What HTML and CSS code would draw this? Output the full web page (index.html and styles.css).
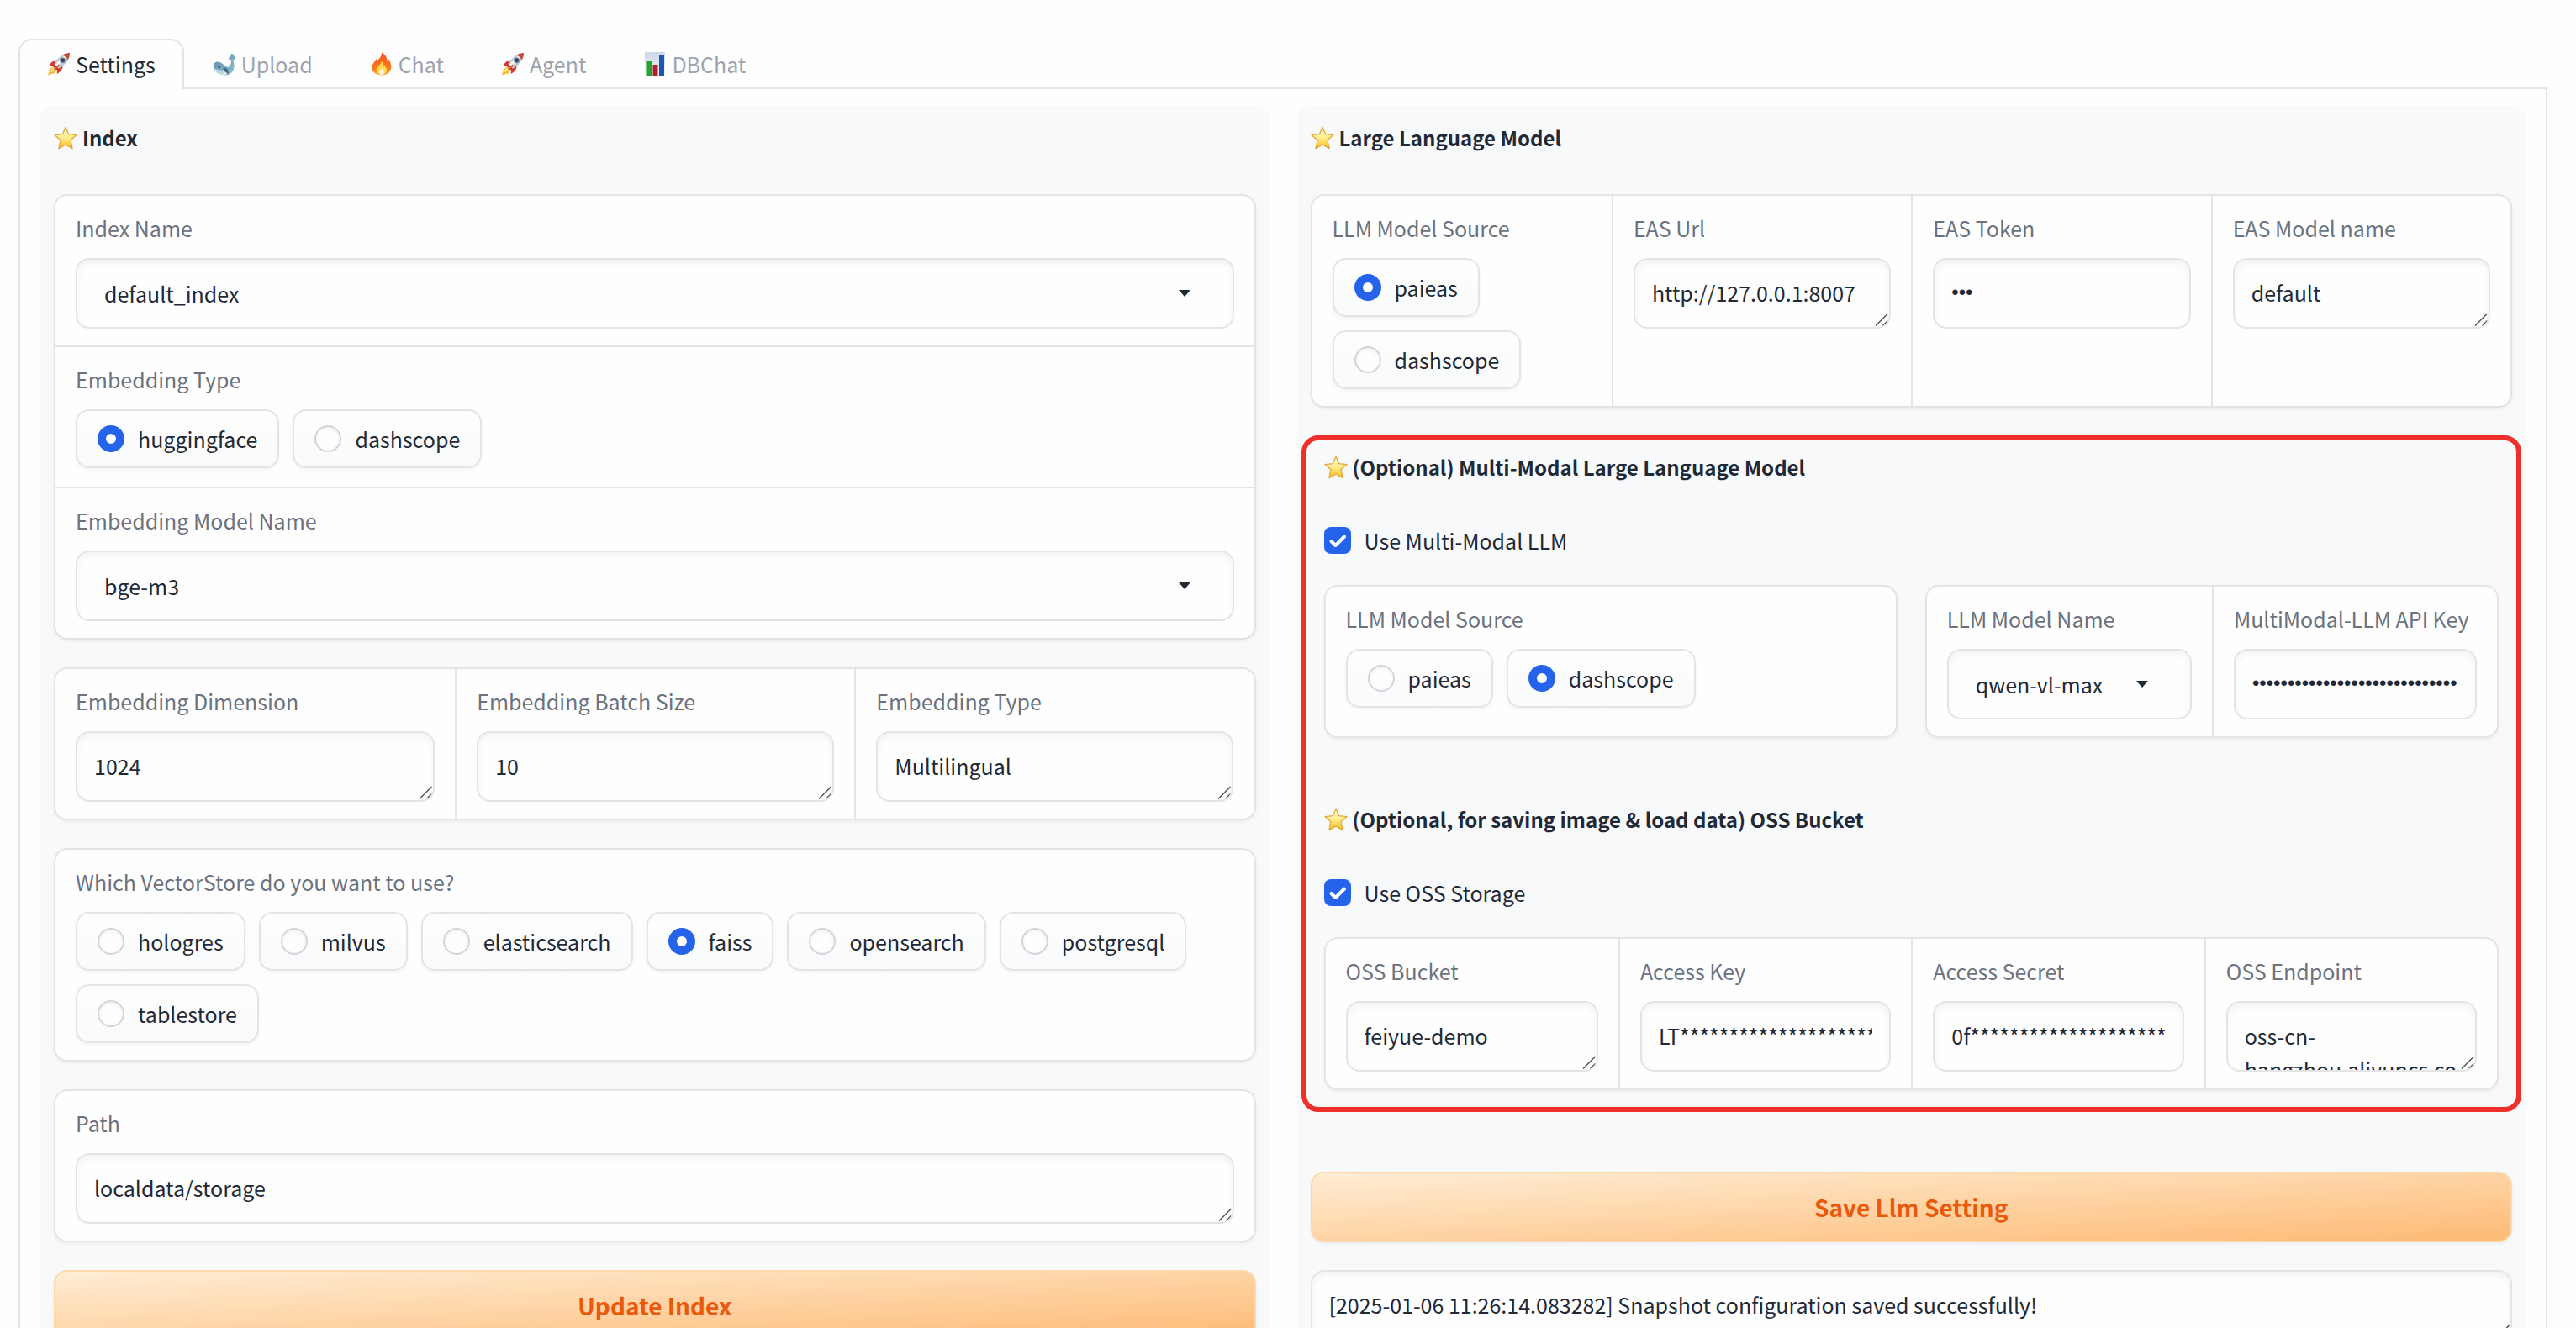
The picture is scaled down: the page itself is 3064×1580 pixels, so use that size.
FILE: index.html
```html
<!DOCTYPE html>
<html lang="en">
<head>
<meta charset="utf-8">
<title>Settings</title>
<link rel="stylesheet" href="styles.css">
</head>
<body>
<svg class="sprite" aria-hidden="true">
  <defs>
    <linearGradient id="gold" x1="0" y1="0" x2="0" y2="1">
      <stop offset="0" stop-color="#fdf8d0"/><stop offset=".5" stop-color="#fdee8c"/><stop offset="1" stop-color="#f8b916"/>
    </linearGradient>
    <linearGradient id="flame" x1="0" y1="0" x2="0" y2="1">
      <stop offset="0" stop-color="#f4511e"/><stop offset=".7" stop-color="#fb7a1c"/><stop offset="1" stop-color="#fcae2a"/>
    </linearGradient>
    <linearGradient id="sea" x1="0" y1="0" x2="1" y2="1">
      <stop offset="0" stop-color="#5f8ba3"/><stop offset="1" stop-color="#8fc1d6"/>
    </linearGradient>
    <linearGradient id="sheet" x1="0" y1="0" x2="0" y2="1">
      <stop offset="0" stop-color="#ccd9e6"/><stop offset="1" stop-color="#f2f6fa"/>
    </linearGradient>
    <symbol id="star" viewBox="0 0 28 28">
      <path d="M14 1.2 17.6 9.6 27 10.6 20 16.8 22.1 26.6 14 22 5.900 26.600 8 16.800 1 10.600 10.400 9.600Z" fill="url(#gold)" stroke="#e3a73c" stroke-width="1.300" stroke-linejoin="round"/>
    </symbol>
    <symbol id="rocket" viewBox="0 0 28 28">
      <path d="M7.500 17 1 22.500 3 22.300 .8 27.500 7.500 25.200 7.300 27 11.500 21Z" fill="#fbb62c"/>
      <path d="M7 18.500 3.800 22.500 4.500 24 9 22Z" fill="#fff08a"/>
      <path d="M12.500 9.500C8 9 4.500 12 2.500 16.500L8.500 16ZM18.500 15.500C19 20 16 23.500 11.800 26L12 19.500Z" fill="#d5382b"/>
      <path d="M27 1C19.500 1.500 13 5.500 8.200 14.500L13.500 19.800C22.500 15 26.500 8.500 27 1Z" fill="#b9cdd9"/>
      <path d="M25 3C18.500 5 13.500 9.500 9.500 15.600L11.500 17.600C17 13 22 8 25 3Z" fill="#eef4f7"/>
      <path d="M27 1C24 1.200 21.300 1.900 19 3L25 9C26.200 6.500 26.900 3.900 27 1Z" fill="#cf4333"/>
      <circle cx="18.500" cy="9.800" r="3.200" fill="#5c6f7c"/><circle cx="18.500" cy="9.800" r="1.800" fill="#26384a"/>
      <path d="M8.200 14.500 13.500 19.800 11.700 21.200 6.800 16.300Z" fill="#a52b25"/>
      <path d="M13.500 14.500 15 16 9.500 22 8 20.500Z" fill="#e9503c"/>
    </symbol>
    <symbol id="whale" viewBox="0 0 28 28">
      <path d="M23 .5C22.800 3.500 19.500 5.500 18.500 9 19.800 8.300 21 8.300 22 9.500 22.500 13 21 16.500 18 18 13.500 16 10 11.500 6 11.500 2 11.500 .3 15 .8 18 2 23.500 8 27.500 15 27.500 21.500 27.500 25.500 22.500 25.500 17 25.500 14 24.600 12 24 9.800 25.800 9.500 27 8 27 5.500 25 5 23.700 3 23 .5Z" fill="url(#sea)"/>
      <path d="M1.500 19.500C6 22 12 22.500 16 20.500 18 22.500 17.500 26 15.500 27 9.500 27.500 4 24.500 1.500 19.500Z" fill="#dcebf2"/>
      <path d="M4.500 22.500 11.500 25.500M6.500 21.800 14 25" stroke="#9fb9c6" stroke-width=".8"/>
      <path d="M12.500 18.500C16 18 19 20.500 19 25.500 15.500 25 12.500 22.500 12.500 18.500Z" fill="#3f6b83"/>
      <circle cx="8" cy="17.500" r="1.200" fill="#223b49"/>
    </symbol>
    <symbol id="fire" viewBox="0 0 28 28">
      <path d="M13.800 .5C14.500 5 11.500 7 9.500 9.800 8.800 8.800 8.900 7.500 8.300 6.500 7.500 10.500 2.500 13 2.500 18.500 2.500 24 7.500 27.500 14 27.500 20.500 27.500 25.300 23.500 25.300 17.500 25.300 13.500 23.500 11 22.800 8.500 21.600 9.700 21.600 11.200 21 12.300 20.500 7 18.500 2.500 13.800 .5Z" fill="url(#flame)"/>
      <path d="M14.500 10C14.500 14 8 16.500 8 21.500 8 25 10.500 26.800 14 26.800 17.800 26.800 20 24.700 20 21.600 20 18.500 18 17.500 17.900 15.200 16.300 16 16.500 17.200 16 18 16.500 14.500 16.400 11.800 14.500 10Z" fill="#ffd84f"/>
      <path d="M13.800 19C13.500 21 10.800 22 10.800 24.200 10.800 26 12.300 26.800 14 26.800 16 26.800 17.300 25.700 17.300 24 17.300 22.200 14.800 21.500 13.800 19Z" fill="#fff8d8"/>
    </symbol>
    <symbol id="chart" viewBox="0 0 28 28">
      <path d="M2 0H26V28H2Z" fill="url(#sheet)"/>
      <path d="M3.500 10H10V28H3.500Z" fill="#26a52e"/>
      <path d="M11.500 15H17.500V28H11.500Z" fill="#b3222b"/>
      <path d="M19 4H25V28H19Z" fill="#1d55b5"/>
    </symbol>
  </defs>
</svg>

<main class="page">
  <nav class="tabs" aria-label="Sections">
    <button class="tab tab-active" type="button"><svg class="tab-icon" aria-hidden="true"><use href="#rocket"/></svg>Settings</button>
    <button class="tab" type="button"><svg class="tab-icon" aria-hidden="true"><use href="#whale"/></svg>Upload</button>
    <button class="tab" type="button"><svg class="tab-icon" aria-hidden="true"><use href="#fire"/></svg>Chat</button>
    <button class="tab" type="button"><svg class="tab-icon" aria-hidden="true"><use href="#rocket"/></svg>Agent</button>
    <button class="tab" type="button"><svg class="tab-icon" aria-hidden="true"><use href="#chart"/></svg>DBChat</button>
  </nav>

  <div class="tab-body">
    <section class="panel">
      <h2 class="heading"><svg class="star" aria-hidden="true"><use href="#star"/></svg>Index</h2>

      <div class="card stack">
        <div class="field">
          <label class="label" for="index-name">Index Name</label>
          <select class="box select" id="index-name"><option>default_index</option></select>
        </div>
        <fieldset class="field">
          <legend class="label">Embedding Type</legend>
          <div class="choices">
            <label class="choice"><input class="radio" type="radio" name="embed" checked>huggingface</label>
            <label class="choice"><input class="radio" type="radio" name="embed">dashscope</label>
          </div>
        </fieldset>
        <div class="field">
          <label class="label" for="embed-model">Embedding Model Name</label>
          <select class="box select" id="embed-model"><option>bge-m3</option></select>
        </div>
      </div>

      <div class="card row">
        <div class="field">
          <label class="label" for="embed-dim">Embedding Dimension</label>
          <textarea class="box area" id="embed-dim" rows="1">1024</textarea>
        </div>
        <div class="field">
          <label class="label" for="embed-batch">Embedding Batch Size</label>
          <textarea class="box area" id="embed-batch" rows="1">10</textarea>
        </div>
        <div class="field">
          <label class="label" for="embed-type">Embedding Type</label>
          <textarea class="box area" id="embed-type" rows="1">Multilingual</textarea>
        </div>
      </div>

      <div class="card">
        <fieldset class="field">
          <legend class="label">Which VectorStore do you want to use?</legend>
          <div class="choices">
            <label class="choice"><input class="radio" type="radio" name="store">hologres</label>
            <label class="choice"><input class="radio" type="radio" name="store">milvus</label>
            <label class="choice"><input class="radio" type="radio" name="store">elasticsearch</label>
            <label class="choice"><input class="radio" type="radio" name="store" checked>faiss</label>
            <label class="choice"><input class="radio" type="radio" name="store">opensearch</label>
            <label class="choice"><input class="radio" type="radio" name="store">postgresql</label>
            <label class="choice"><input class="radio" type="radio" name="store">tablestore</label>
          </div>
        </fieldset>
      </div>

      <div class="card">
        <div class="field">
          <label class="label" for="path">Path</label>
          <textarea class="box area" id="path" rows="1">localdata/storage</textarea>
        </div>
      </div>

      <button class="primary" type="button">Update Index</button>
    </section>

    <section class="panel">
      <h2 class="heading"><svg class="star" aria-hidden="true"><use href="#star"/></svg>Large Language Model</h2>

      <div class="card row">
        <fieldset class="field">
          <legend class="label">LLM Model Source</legend>
          <div class="choices">
            <label class="choice"><input class="radio" type="radio" name="llm" checked>paieas</label>
            <label class="choice"><input class="radio" type="radio" name="llm">dashscope</label>
          </div>
        </fieldset>
        <div class="field">
          <label class="label" for="eas-url">EAS Url</label>
          <textarea class="box area" id="eas-url" rows="1">http://127.0.0.1:8007</textarea>
        </div>
        <div class="field">
          <label class="label" for="eas-token">EAS Token</label>
          <input class="box secret" id="eas-token" type="password" value="abc">
        </div>
        <div class="field">
          <label class="label" for="eas-model">EAS Model name</label>
          <textarea class="box area" id="eas-model" rows="1">default</textarea>
        </div>
      </div>

      <div class="highlight">
        <h2 class="heading"><svg class="star" aria-hidden="true"><use href="#star"/></svg>(Optional) Multi-Modal Large Language Model</h2>
        <label class="toggle"><input class="check" type="checkbox" checked>Use Multi-Modal LLM</label>
        <div class="pair">
          <div class="card">
            <fieldset class="field">
              <legend class="label">LLM Model Source</legend>
              <div class="choices">
                <label class="choice"><input class="radio" type="radio" name="mllm">paieas</label>
                <label class="choice"><input class="radio" type="radio" name="mllm" checked>dashscope</label>
              </div>
            </fieldset>
          </div>
          <div class="card row">
            <div class="field">
              <label class="label" for="mllm-name">LLM Model Name</label>
              <select class="box select" id="mllm-name"><option>qwen-vl-max</option></select>
            </div>
            <div class="field">
              <label class="label" for="mllm-key">MultiModal-LLM API Key</label>
              <input class="box secret" id="mllm-key" type="password" value="abcdefghijklmnopqrstuvwxyzabc">
            </div>
          </div>
        </div>

        <h2 class="heading heading-next"><svg class="star" aria-hidden="true"><use href="#star"/></svg>(Optional, for saving image &amp; load data) OSS Bucket</h2>
        <label class="toggle"><input class="check" type="checkbox" checked>Use OSS Storage</label>
        <div class="card row">
          <div class="field">
            <label class="label" for="oss-bucket">OSS Bucket</label>
            <textarea class="box area" id="oss-bucket" rows="1">feiyue-demo</textarea>
          </div>
          <div class="field">
            <label class="label" for="oss-key">Access Key</label>
            <input class="box" id="oss-key" type="text" value="LT**********************">
          </div>
          <div class="field">
            <label class="label" for="oss-secret">Access Secret</label>
            <input class="box" id="oss-secret" type="text" value="0f********************">
          </div>
          <div class="field">
            <label class="label" for="oss-endpoint">OSS Endpoint</label>
            <textarea class="box area" id="oss-endpoint" rows="1">oss-cn-hangzhou.aliyuncs.com</textarea>
          </div>
        </div>
      </div>

      <button class="primary primary-save" type="button">Save Llm Setting</button>
      <textarea class="box area status" aria-label="Status" rows="1">[2025-01-06 11:26:14.083282] Snapshot configuration saved successfully!</textarea>
    </section>
  </div>
</main>
</body>
</html>
```
FILE: styles.css
```css
:root {
  --line: #e4e4e7;
  --text: #1f2937;
  --muted: #6b7280;
  --accent: #2563eb;
}

* { box-sizing: border-box; }

html { scrollbar-width: none; }

body {
  margin: 0;
  background: #fefefe;
  color: var(--text);
  font-family: "Noto Sans CJK SC", "Noto Sans", sans-serif;
  font-size: 25px;
  line-height: 40px;
}

button, input, select, textarea { font: inherit; color: inherit; margin: 0; }

.sprite { display: block; width: 0; height: 0; }

.page {
  height: 100vh;
  overflow: auto;
  scrollbar-width: none;
  padding: 46px 34px 0 22px;
}

/* Tabs */
.tabs {
  display: flex;
  height: 60px;
  box-shadow: inset 0 -2px 0 var(--line);
}

.tab {
  display: flex;
  align-items: center;
  padding: 0 32px 2px;
  border: 2px solid transparent;
  border-bottom: 0;
  border-radius: 16px 16px 0 0;
  background: none;
  color: #9ca3af;
}

.tab-active {
  border-color: var(--line);
  background: #fefefe;
  color: var(--text);
}

.tab-icon { width: 28px; height: 28px; margin-right: 6px; }

.tab-body {
  display: grid;
  grid-template-columns: 1fr 1fr;
  gap: 33px;
  padding: 20px 24px 32px;
  border: solid var(--line);
  border-width: 0 2px 2px;
}

.panel {
  display: flex;
  flex-direction: column;
  gap: 33px;
  min-width: 0;
  padding: 16px;
  border-radius: 16px;
  background: #f8f9fb;
}

.heading {
  display: flex;
  align-items: center;
  margin: 0 0 12px;
  font-size: 24px;
  font-weight: 600;
  line-height: 44px;
}

.heading-next { margin-top: 42px; }

.star { width: 28px; height: 28px; margin-right: 6px; }

/* Cards and fields */
.card {
  border: 2px solid var(--line);
  border-radius: 16px;
  background: #fefefe;
  box-shadow: 0 2px 4px rgba(0, 0, 0, .05);
}

.row {
  display: grid;
  grid-auto-flow: column;
  grid-auto-columns: minmax(0, 1fr);
}

.field {
  min-width: 0;
  margin: 0;
  padding: 20px 24px;
  border: 0;
}

.row > .field + .field { border-left: 2px solid var(--line); }
.stack > .field + .field { border-top: 2px solid var(--line); }
.stack > fieldset.field { padding-bottom: 22px; }

.label {
  display: block;
  padding: 0 0 18px;
  color: var(--muted);
  line-height: 36px;
  white-space: nowrap;
}

/* Floated so that the caption sits inside the fieldset's padding */
legend.label { float: left; width: 100%; }

.box {
  display: block;
  width: 100%;
  height: 84px;
  padding: 19px 20px 21px;
  border: 2px solid var(--line);
  border-radius: 16px;
  background-color: #fefefe;
  box-shadow: inset 0 4px 8px rgba(0, 0, 0, .05);
  line-height: 40px;
}

.secret { font-family: "Liberation Sans", sans-serif; font-size: 24px; }

.select {
  appearance: none;
  padding: 0 32px;
  background-image: url("data:image/svg+xml,%3Csvg xmlns='http://www.w3.org/2000/svg' width='14' height='8'%3E%3Cpath d='M0 0h14l-7 8z' fill='%231f2937'/%3E%3C/svg%3E");
  background-repeat: no-repeat;
  background-position: right 50px center;
}

.area {
  overflow: hidden;
  resize: none;
  background-image: url("data:image/svg+xml,%3Csvg xmlns='http://www.w3.org/2000/svg' width='16' height='16'%3E%3Cpath d='M1 15.500L15.500 1M9.500 15.500L15.500 9.500' stroke='%23555' stroke-width='1.500'/%3E%3C/svg%3E");
  background-repeat: no-repeat;
  background-position: right 1px bottom 1px;
}

.choices { display: flex; flex-wrap: wrap; gap: 16px; clear: both; }

.choice {
  display: flex;
  align-items: center;
  gap: 16px;
  height: 70px;
  padding: 0 24px;
  border: 2px solid var(--line);
  border-radius: 16px;
  background: linear-gradient(to bottom, #fefefe, #f9fafb);
  box-shadow: 0 2px 4px rgba(0, 0, 0, .05);
}

.radio {
  appearance: none;
  width: 32px;
  height: 32px;
  border: 2px solid #d1d5db;
  border-radius: 50%;
  background: #fefefe;
  box-shadow: inset 0 2px 4px rgba(0, 0, 0, .06);
}

.radio:checked { border: 10px solid var(--accent); box-shadow: none; }

.toggle { display: flex; align-items: center; gap: 16px; height: 40px; }

.check {
  appearance: none;
  width: 32px;
  height: 32px;
  border-radius: 8px;
  background: var(--accent) url("data:image/svg+xml,%3Csvg xmlns='http://www.w3.org/2000/svg' width='32' height='32'%3E%3Cpath d='M8.500 17l5 5L24 11.500' fill='none' stroke='white' stroke-width='4' stroke-linecap='round' stroke-linejoin='round'/%3E%3C/svg%3E") center no-repeat;
}

.highlight {
  display: flex;
  flex-direction: column;
  gap: 33px;
  margin: 0 -11px;
  padding: 10px 21px 20px;
  border: 6px solid #ee2f2a;
  border-radius: 20px;
}

.pair { display: grid; grid-template-columns: 1fr 1fr; gap: 33px; }

.primary {
  height: 84px;
  padding: 0;
  border: 2px solid #fed7aa;
  border-radius: 16px;
  background: linear-gradient(to bottom right, #ffedd5, #fdba74);
  box-shadow: 0 2px 4px rgba(0, 0, 0, .05);
  color: #ea580c;
  font-size: 28px;
  font-weight: 600;
}

.primary-save { margin-top: 38px; }
```
